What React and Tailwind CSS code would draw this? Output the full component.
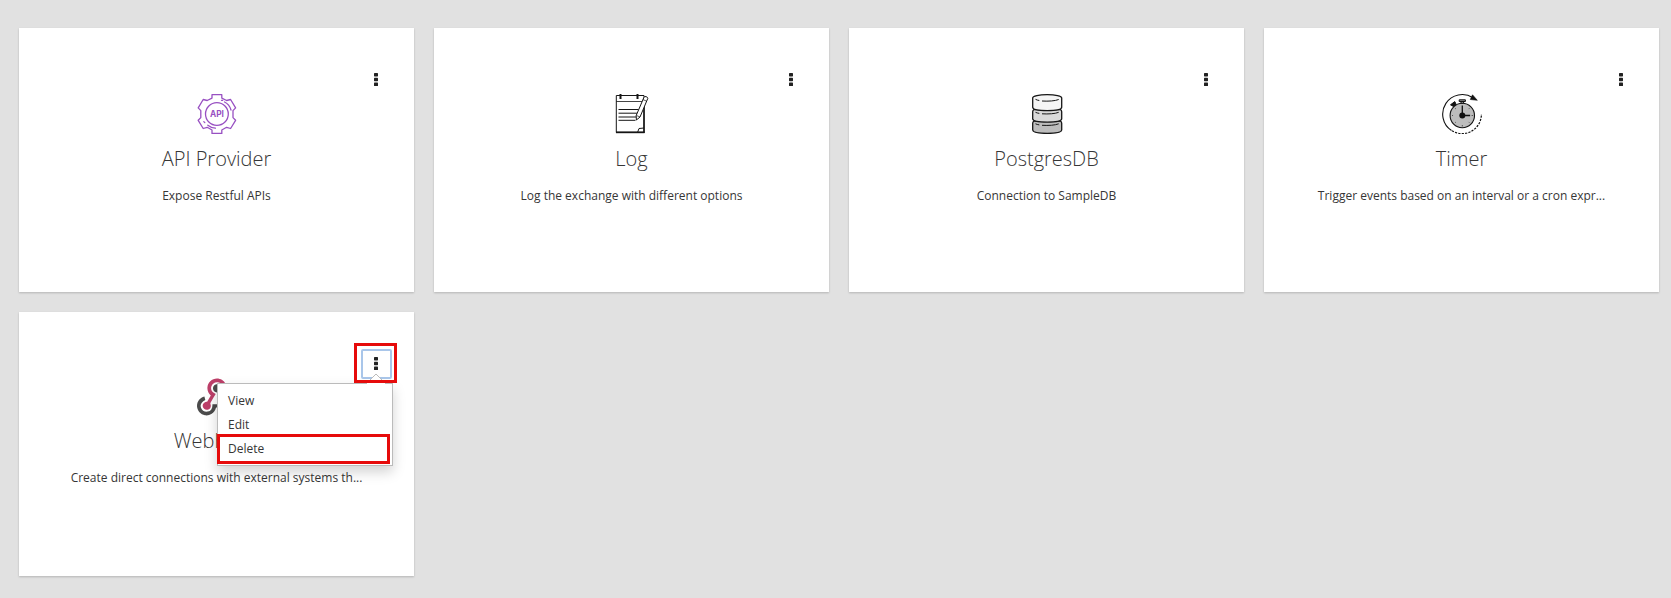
function ApiIcon() {
  return (
    <svg className="block h-10 w-10" viewBox="0 0 40 40" fill="none" stroke="#9850c2" strokeWidth="1.3" strokeLinejoin="round" strokeLinecap="round">
      <path d="M15 .7h9.800v3.400l4.800 2.400 4-1 5 8.400-2.600 2.700v7l2.600 2.700-5 8.200-4-1.200-4.800 2.700v3.400H15V36l-4.800-2.700-4 1.200-5-8.200 2.600-2.700v-7l-2.600-2.700 5-8.400 4 1L15 4.100z" />
      <circle cx="19.900" cy="20" r="11.400" />
      <path d="M27.500 8c3.200 1.500 5.500 4.400 6.500 8M24.500 6.300h1.200M10.800 31.200c2.300 1.800 4.800 2.800 7.600 3M6.800 27.600l1 1" />
      <text x="19.900" y="22.900" textAnchor="middle" fill="#9850c2" stroke="none" fontFamily="Inter, sans-serif" fontSize="8.300" fontWeight="700">API</text>
    </svg>
  );
}

function LogIcon() {
  return (
    <svg className="block h-10 w-10" viewBox="0 0 40 40" fill="none" stroke="#151515" strokeWidth="1">
      <path d="M4.300 1.500H32v37H4.300z" fill="#fff" />
      <path d="M4 38.300h28.500" strokeWidth="1.800" />
      <path d="M32 12v27" strokeWidth="1.500" />
      <path d="M4.300 7.500h26" strokeWidth=".8" />
      <path d="M8.500 0v5M25.500 0v5" strokeWidth="2" />
      <path d="M6.500 15.500h20M6.500 19.200h18.500M6.500 23h18M6.500 26.300h17" />
      <path d="M25.500 38.500l1.500-4 5-.5" />
      <path d="M32 3.200c.6-1.300 3.800-.6 3.800 1.200L28 23l-3.600 3-.2-4.500z" fill="#fff" />
      <path d="M30.800 5.500l3.800 1.700M24.300 21.400l3.700 1.600" strokeWidth=".7" />
    </svg>
  );
}

function DatabaseIcon() {
  return (
    <svg className="block h-10 w-10" viewBox="0 0 40 40" fill="none" stroke="#161616" strokeWidth="1.300">
      <path d="M7 27c-.9.700-1.300 1.300-1.300 2.200V36c0 2.100 6.300 3.400 14.500 3.400S34.700 38.100 34.700 36v-6.800c0-.9-.4-1.500-1.300-2.200z" fill="#bdbdbd" />
      <path d="M7 15.500c-.9.700-1.300 1.300-1.300 2.200v7c0 2.100 6.300 3.400 14.500 3.400s14.500-1.300 14.500-3.400v-7c0-.9-.4-1.500-1.300-2.200z" fill="#dadada" />
      <path d="M5.700 4v9.200c0 2.100 6.300 3.400 14.500 3.400s14.500-1.300 14.500-3.400V4C34.700 2 28.400.7 20.200.7S5.700 2 5.700 4z" fill="#f5f5f5" />
      <path d="M8.500 5.300c1 .6 2.400 1 3.800 1.200M15 7c6.500.4 13 0 16.700-1.500M8.500 18.300c1 .5 2.400.9 3.800 1.100M15 19.800c6.500.4 13 0 16.700-1.500M8.500 29.800c1 .5 2.400.9 3.800 1.100M15 31.300c6.500.4 13 0 16.700-1.500" strokeWidth="1" />
    </svg>
  );
}

function TimerIcon() {
  return (
    <svg className="block h-10 w-10" viewBox="0 0 40 40" fill="none" stroke="#111">
      <path d="M9.500 36.500A19.300 19.300 0 0 1 31 3.800" strokeWidth="1.100" />
      <path d="M10 36.800A19.300 19.300 0 0 0 39.400 20" strokeWidth="1.200" strokeDasharray="2.200 1.200" />
      <path d="M30.500.8l4.800 5.500-7-.8z" fill="#111" strokeWidth=".6" />
      <circle cx="20.300" cy="21.500" r="12.200" fill="#bdbdbd" strokeWidth="1.100" />
      <path d="M17.200 5.800h6.200v1.700h-6.200zM19 7.500v1.800h2.600V7.500" fill="#999" strokeWidth="1" />
      <path d="M8.500 10.800l4.300-3.200 1.200 2.600-2.600 2.200z" fill="#111" strokeWidth="1" />
      <path d="M20.300 11.500v10h7.800" strokeWidth="1.300" />
      <circle cx="20.300" cy="21.500" r="3" fill="#111" stroke="none" />
      <path d="M20.300 31v1.500M10 21.500h1M29.600 21.500h1.500M13.200 14.300l.8.8M13.200 28.700l.8-.8M27.400 28.700l-.8-.8M27.400 14.300l-.8.8" strokeWidth=".6" />
    </svg>
  );
}

function WebhookIcon() {
  return (
    <svg className="block h-[38px] w-10" viewBox="0 0 256 239">
      <path fill="#bd3f69" d="M119.540 100.503c-10.610 17.836-20.775 35.108-31.152 52.250-2.665 4.401-3.984 7.986-1.855 13.580 5.878 15.454-2.414 30.493-17.998 34.575-14.697 3.851-29.016-5.808-31.932-21.543-2.584-13.927 8.224-27.580 23.580-29.757 1.286-.184 2.600-.205 4.762-.367l23.358-39.168C73.612 95.465 64.868 78.390 66.803 57.230c1.368-14.957 7.250-27.883 18-38.477 20.590-20.288 52.002-23.573 76.246-8.001 23.284 14.958 33.948 44.094 24.858 69.031-6.854-1.858-13.756-3.732-21.343-5.790 2.854-13.865.743-26.315-8.608-36.981-6.178-7.042-14.106-10.733-23.120-12.093-18.072-2.730-35.815 8.880-41.080 26.618-5.976 20.130 3.069 36.575 27.784 48.967z" />
      <path fill="#4b4b4b" d="M149.841 79.410c7.507 13.243 15.127 26.680 22.678 39.985 38.161-11.807 66.934 9.318 77.256 31.935 12.468 27.320 3.945 59.679-20.543 76.535-25.135 17.305-56.926 14.347-79.198-7.883l17.458-14.608c21.986 14.240 41.215 13.570 55.491-3.293 12.174-14.386 11.910-35.837-.617-49.919-14.456-16.250-33.820-16.747-57.178-1.178-9.690-17.193-19.548-34.247-28.931-51.552-3.163-5.835-6.658-9.220-13.775-10.452-11.886-2.061-19.560-12.268-20.020-23.704-.453-11.313 6.210-21.543 16.628-25.524 10.319-3.945 22.430-.761 29.371 8.014 5.674 7.172 7.477 15.244 4.492 24.088-.830 2.466-1.908 4.852-3.112 7.556z" />
      <path fill="#4b4b4b" d="M167.707 187.210h-45.770c-4.387 18.044-13.863 32.612-30.190 41.876-12.693 7.200-26.373 9.641-40.933 7.290-26.808-4.323-48.728-28.456-50.658-55.630-2.184-30.784 18.975-58.147 47.178-64.293l5.927 21.509c-25.876 13.202-34.832 29.836-27.590 50.636 6.375 18.304 24.484 28.337 44.147 24.457 20.080-3.962 30.204-20.650 28.968-47.432 19.036 0 38.088-.197 57.126.097 7.434.117 13.173-.654 18.773-7.208 9.220-10.784 26.191-9.811 36.121.374 10.148 10.409 9.662 27.157-1.077 37.127-10.361 9.620-26.730 9.106-36.424-1.260-1.992-2.136-3.562-4.673-5.598-7.389z" />
    </svg>
  );
}

function KebabIcon() {
  return (
    <svg className="block h-[13px] w-1" viewBox="0 0 4 13" fill="#222">
      <rect x="0" y="0" width="4" height="3.400" rx=".6" />
      <rect x="0" y="4.800" width="4" height="3.400" rx=".6" />
      <rect x="0" y="9.600" width="4" height="3.400" rx=".6" />
    </svg>
  );
}

function ActionsMenu() {
  return (
    <div className="absolute top-[34px] -right-px w-[176px] text-left">
      <ul className="border border-[#bbb] bg-white pt-[5px] pb-px text-xs leading-6 shadow-[0_6px_12px_rgba(0,0,0,0.175)]">
        <li className="px-2.5">View</li>
        <li className="px-2.5">Edit</li>
        <li className="-mt-[3px] -ml-px flex h-[30px] w-[173px] border-3 border-[#e60b0b] px-2">Delete</li>
      </ul>
      <svg className="absolute -top-[10px] right-[7px] h-[12px] w-[20px]" viewBox="0 0 20 12">
        <path d="M0 11L10 1l10 10v1H0z" fill="#fff" />
        <path d="M0 11L10 1l10 10" fill="none" stroke="#bbb" />
      </svg>
    </div>
  );
}

function Kebab({ open }) {
  return (
    <div className="relative h-[30px] w-[31px]">
      <button className={open ? "block h-full w-full rounded-[2px] border-2 border-[#a9c6ea] pb-px pl-[11px]" : "block h-full w-full border-2 border-transparent pb-px pl-[11px]"}>
        <KebabIcon />
      </button>
      {open && (
        <>
          <ActionsMenu />
          <div className="absolute -top-[6px] -left-[7px] h-10 w-[43px] border-3 border-[#e60b0b]" />
        </>
      )}
    </div>
  );
}

function Card({ icon, title, description, open }) {
  return (
    <article className="flex h-[264px] flex-col bg-white pt-[37px] text-center shadow-[0_1px_2px_rgba(3,3,3,0.2)]">
      <div className={open ? "relative z-10 flex h-[29px] justify-end pr-[22px]" : "flex h-[29px] justify-end pr-[22px]"}>
        <Kebab open={open} />
      </div>
      <div className="flex justify-center">{icon}</div>
      <h2 className="mt-[9px] text-xl leading-8 font-light">{title}</h2>
      <p className="mt-[11px] text-xs leading-5">{description}</p>
    </article>
  );
}

const connections = [
  { title: "API Provider", description: "Expose Restful APIs", icon: <ApiIcon /> },
  { title: "Log", description: "Log the exchange with different options", icon: <LogIcon /> },
  { title: "PostgresDB", description: "Connection to SampleDB", icon: <DatabaseIcon /> },
  { title: "Timer", description: "Trigger events based on an interval or a cron expr...", icon: <TimerIcon /> },
  { title: "Webhook", description: "Create direct connections with external systems th...", icon: <WebhookIcon />, open: true },
];

export default function App() {
  return (
    <main className="h-[598px] bg-[#e1e1e1] pt-7 pr-3 pl-[19px] font-['Open_Sans',sans-serif] text-[#363636]">
      <div className="grid grid-cols-4 gap-5">
        {connections.map((c) => (
          <Card key={c.title} {...c} />
        ))}
      </div>
    </main>
  );
}
